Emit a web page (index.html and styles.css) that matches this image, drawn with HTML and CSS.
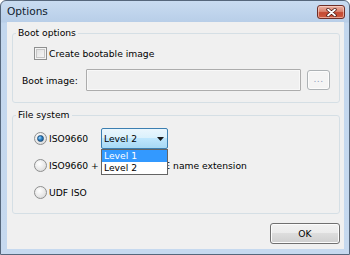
FILE: index.html
```html
<!DOCTYPE html>
<html>
<head>
<meta charset="utf-8">
<link rel="stylesheet" href="styles.css">
</head>
<body>
<div class="window">
  <div class="titlebar">
    <span class="title">Options</span>
    <div class="close">
      <svg width="13" height="9" viewBox="0 0 13 9">
        <path d="M3 1.5 L10 7.5 M10 1.5 L3 7.5" stroke="#4a1a16" stroke-width="3.4" stroke-linecap="round"/>
        <path d="M3 1.5 L10 7.5 M10 1.5 L3 7.5" stroke="#ffffff" stroke-width="1.8" stroke-linecap="round"/>
      </svg>
    </div>
  </div>
  <div class="client">
    <fieldset class="group">
      <legend>Boot options</legend>
      <div class="group-body boot-body">
        <label class="check-row"><span class="checkbox"></span><span>Create bootable image</span></label>
        <div class="image-row">
          <span class="field-label">Boot image:</span>
          <span class="textbox"></span>
          <span class="browse">...</span>
        </div>
      </div>
    </fieldset>
    <fieldset class="group fs-group">
      <legend>File system</legend>
      <div class="group-body fs-body">
        <div class="radio-row">
          <span class="radio checked"></span>
          <span class="radio-text fixed">ISO9660</span>
          <div class="combo">
            <span class="combo-text">Level 2</span>
            <svg class="arrow" width="7" height="4" viewBox="0 0 7 4"><path d="M0 0 H7 L3.5 4 Z" fill="#1a1a1a"/></svg>
            <div class="dropdown">
              <div class="item selected">Level 1</div>
              <div class="item">Level 2</div>
            </div>
          </div>
        </div>
        <div class="radio-row">
          <span class="radio"></span>
          <span class="radio-text">ISO9660 + Joliet UNICODE name extension</span>
        </div>
        <div class="radio-row">
          <span class="radio"></span>
          <span class="radio-text">UDF ISO</span>
        </div>
      </div>
    </fieldset>
    <div class="buttons">
      <button class="btn">OK</button>
    </div>
  </div>
</div>
</body>
</html>
```

FILE: styles.css
```css
html, body {
  margin: 0;
  padding: 0;
  background: #ffffff;
}
body {
  font-family: "DejaVu Sans", sans-serif;
  font-size: 9.2px;
  color: #000;
}
.window {
  width: 350px;
  height: 255px;
  box-sizing: border-box;
  border: 1px solid #56677c;
  border-radius: 6px 6px 0 0;
  background: linear-gradient(#c9dcf1 0px, #b8cee8 21px, #c3d7ee 22px, #c6d9ef 100%);
  display: flex;
  flex-direction: column;
  overflow: hidden;
}
.titlebar {
  height: 21px;
  flex: none;
  display: flex;
  align-items: flex-start;
  padding-left: 6px;
}
.title {
  font-size: 10.6px;
  line-height: 21px;
  color: #0f1c2e;
}
.close {
  margin-left: auto;
  margin-right: 4px;
  margin-top: 4px;
  width: 28px;
  height: 14px;
  box-sizing: border-box;
  border: 1px solid #6e2e28;
  border-radius: 3px;
  background: linear-gradient(#eab1a4 0%, #db8470 45%, #c44a33 55%, #cf5a40 100%);
  box-shadow: inset 0 0 0 1px rgba(255, 225, 215, 0.55);
  display: flex;
  align-items: center;
  justify-content: center;
}
.client {
  flex: 1;
  margin: 0 5px 5px 6px;
  background: #f0f0f0;
  padding: 4px 4px 0 5px;
  display: flex;
  flex-direction: column;
}
.group {
  margin: 0;
  padding: 0;
  border: 1px solid #d5dfe5;
  border-radius: 3px;
  min-width: 0;
}
.group legend {
  margin-left: 3px;
  padding: 0 2px;
  line-height: 14px;
}
.fs-group {
  margin-top: 5px;
}
.boot-body {
  padding: 7px 0 11px 9px;
  display: flex;
  flex-direction: column;
  gap: 9px;
}
.check-row {
  margin-left: 12px;
  height: 13px;
  display: flex;
  align-items: center;
  gap: 2px;
}
.checkbox {
  width: 13px;
  height: 13px;
  box-sizing: border-box;
  border: 1px solid #8e8f8f;
  background: linear-gradient(135deg, #dcdcdc, #fbfbfb);
  box-shadow: inset 0 0 0 1px #f4f4f4, inset 0 0 0 2px #c6c6c6;
}
.image-row {
  height: 22px;
  display: flex;
  align-items: center;
}
.field-label {
  width: 64px;
}
.textbox {
  width: 215px;
  height: 22px;
  box-sizing: border-box;
  border: 1px solid #acacac;
  border-radius: 1px;
  background: #f0f0f0;
  box-shadow: inset 0 0 0 1px #f8f8f8;
}
.browse {
  margin-left: 6px;
  width: 23px;
  height: 20px;
  box-sizing: border-box;
  border: 1px solid #adb2b5;
  border-radius: 3px;
  background: #f4f4f4;
  box-shadow: inset 0 0 0 1px #fcfcfc;
  color: #8c9bbd;
  font-size: 9px;
  line-height: 16px;
  text-align: center;
  letter-spacing: 0.5px;
}
.fs-body {
  padding: 6px 0 10px 21px;
  display: flex;
  flex-direction: column;
  gap: 6px;
}
.radio-row {
  height: 21px;
  display: flex;
  align-items: center;
  white-space: nowrap;
}
.radio {
  width: 13px;
  height: 13px;
  box-sizing: border-box;
  border-radius: 50%;
  border: 1px solid #8e8f8f;
  background: radial-gradient(circle at 40% 35%, #ffffff 0%, #e6e6e6 60%, #cfcfcf 100%);
  margin-right: 2px;
  flex: none;
  display: flex;
  align-items: center;
  justify-content: center;
}
.radio.checked::after {
  content: "";
  width: 5px;
  height: 5px;
  border-radius: 50%;
  background: radial-gradient(circle at 35% 35%, #9fd8ff 0%, #2a80c6 45%, #174f82 100%);
  border: 1px solid #1f4f7a;
}
.radio-text.fixed {
  width: 52px;
}
.combo {
  position: relative;
  width: 67px;
  height: 21px;
  box-sizing: border-box;
  border: 1px solid #3c7fb1;
  border-radius: 2px;
  background: linear-gradient(#eaf6fd 0%, #d9f0fc 50%, #bee6fd 50%, #a7d9f5 100%);
  display: flex;
  align-items: center;
  padding-left: 2px;
}
.arrow {
  margin-left: auto;
  margin-right: 3px;
}
.dropdown {
  position: absolute;
  top: calc(100% + 1px);
  left: -1px;
  width: 67px;
  box-sizing: border-box;
  border: 1px solid #646464;
  background: #ffffff;
}
.item {
  height: 12px;
  line-height: 12px;
  padding-left: 2px;
}
.item.selected {
  background: #3399ff;
  color: #ffffff;
}
.buttons {
  margin-top: 9px;
  display: flex;
  justify-content: flex-end;
}
.btn {
  width: 70px;
  height: 21px;
  box-sizing: border-box;
  border: 1px solid #707070;
  border-radius: 3px;
  background: linear-gradient(#f2f2f2 0%, #ebebeb 50%, #dddddd 50%, #cfcfcf 100%);
  box-shadow: inset 0 0 0 1px #fcfcfc;
  font-family: "DejaVu Sans", sans-serif;
  font-size: 9.2px;
  color: #000;
  padding: 0;
}
```
